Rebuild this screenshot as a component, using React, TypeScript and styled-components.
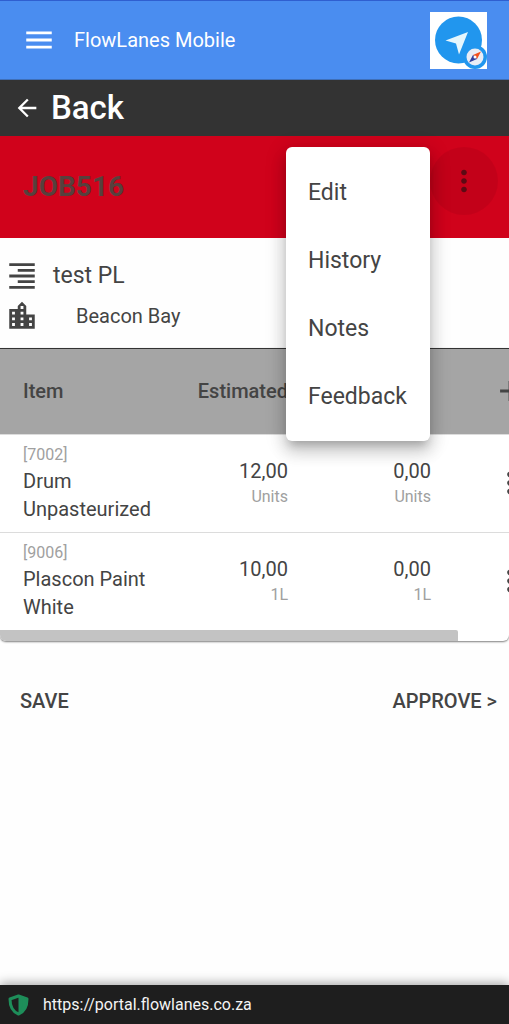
import React from "react";
import styled, { createGlobalStyle } from "styled-components";
import {
  MdAdd,
  MdArrowBack,
  MdFormatAlignRight,
  MdLocationCity,
  MdMenu,
  MdMoreVert,
} from "react-icons/md";

const GlobalStyle = createGlobalStyle`
  *, *::before, *::after { box-sizing: border-box; }
  body {
    margin: 0;
    background: #fefefe;
    color: #444;
    font-family: Roboto, "Liberation Sans", sans-serif;
    font-size: 20px;
    line-height: 28px;
  }
  button {
    font: inherit;
    color: inherit;
    border: 0;
    padding: 0;
    background: none;
    cursor: pointer;
  }
`;

const Page = styled.div`
  display: flex;
  flex-direction: column;
  min-height: 100vh;
`;

const AppBar = styled.header`
  display: flex;
  align-items: center;
  gap: 18px;
  height: 80px;
  padding: 0 22px;
  border-top: 1px solid #2f5fd0;
  border-bottom: 1px solid #3f6fb8;
  background: #4a8df0;
  color: #fff;
`;

const AppTitle = styled.span`
  flex: 1;
`;

const IconButton = styled.button<{ $size: number; $shade?: boolean }>`
  display: flex;
  align-items: center;
  justify-content: center;
  width: ${(p) => p.$size}px;
  height: ${(p) => p.$size}px;
  border-radius: 50%;
  background: ${(p) => (p.$shade ? "rgba(0, 0, 0, 0.06)" : "none")};
  flex: none;
`;

const LogoSvg = styled.svg`
  display: block;
  width: 57px;
  height: 57px;
  flex: none;
`;

const BackBar = styled.a`
  display: flex;
  align-items: center;
  gap: 10px;
  height: 56px;
  padding: 0 13px;
  background: #333;
  color: #fff;
  font-size: 33px;
  font-weight: 500;
  text-decoration: none;
`;

const JobBar = styled.section`
  display: flex;
  justify-content: space-between;
  height: 102px;
  padding: 11px 11px 11px 23px;
  background: #d0021b;
`;

const JobTitle = styled.h1`
  align-self: center;
  margin: 0;
  color: #57403d;
  font-size: 28px;
  font-weight: 700;
`;

const MenuAnchor = styled.div`
  position: relative;
  color: #5c0a14;
`;

const Menu = styled.div`
  position: absolute;
  top: 0;
  right: 100%;
  z-index: 2;
  display: flex;
  flex-direction: column;
  width: 144px;
  padding: 11px 0;
  border-radius: 6px;
  background: #fff;
  color: #444;
  box-shadow: 0 7px 8px -4px rgba(0, 0, 0, 0.2),
    0 11px 16px 1px rgba(0, 0, 0, 0.14), 0 4px 20px 3px rgba(0, 0, 0, 0.12);
`;

const MenuItem = styled.button`
  height: 68px;
  padding: 1px 22px 0;
  font-size: 23px;
  text-align: left;
`;

const Details = styled.section`
  display: flex;
  flex-direction: column;
  gap: 6px;
  padding: 21px 5px 15px;
`;

const DetailRow = styled.div<{ $gap: number; $size: number }>`
  display: flex;
  align-items: center;
  gap: ${(p) => p.$gap}px;
  height: 34px;
  font-size: ${(p) => p.$size}px;
`;

const TableCard = styled.section`
  overflow: hidden;
  border-top: 1px solid #333;
  border-radius: 0 0 6px 6px;
  background: #fff;
  box-shadow: 0 1px 2px rgba(0, 0, 0, 0.5);
`;

const TableScroller = styled.div`
  overflow-x: auto;
  scrollbar-width: none;
`;

const Table = styled.table`
  width: 566px;
  min-width: 100%;
  table-layout: fixed;
  border-collapse: collapse;
`;

const Col = styled.col<{ $width: number }>`
  width: ${(p) => p.$width}px;
`;

const HeadCell = styled.th<{ $align?: "left" | "right" }>`
  height: 85px;
  padding: 0 23px;
  background: #a5a5a5;
  font-weight: 500;
  text-align: ${(p) => p.$align ?? "left"};
`;

const Cell = styled.td<{ $align?: "left" | "right" }>`
  height: 98px;
  padding: 0 23px;
  border-top: 1px solid #dcdcdc;
  text-align: ${(p) => p.$align ?? "left"};
`;

const ActionBox = styled.div`
  display: flex;
  justify-content: center;
`;

const Small = styled.div`
  color: #a0a0a0;
  font-size: 16px;
  line-height: 24px;
`;

const ScrollTrack = styled.div`
  height: 11px;
`;

const ScrollThumb = styled.div`
  width: 90%;
  height: 100%;
  background: #c3c3c3;
  border-radius: 0 2px 0 0;
`;

const Actions = styled.div`
  display: flex;
  justify-content: space-between;
  padding: 46px 12px 46px 20px;
`;

const TextButton = styled.button`
  font-weight: 500;
`;

const AddressBar = styled.footer`
  display: flex;
  align-items: center;
  gap: 14px;
  height: 39px;
  margin-top: auto;
  padding: 0 8px;
  background: #1e1e1e;
  box-shadow: 0 -2px 10px rgba(0, 0, 0, 0.35);
  color: #f4f4f4;
  font-size: 16px;
`;

const ShieldSvg = styled.svg`
  display: block;
  width: 21px;
  height: 22px;
  flex: none;
`;

const menuItems = ["Edit", "History", "Notes", "Feedback"];

const items = [
  { code: "[7002]", name: "Drum Unpasteurized", estimated: "12,00", actual: "0,00", unit: "Units" },
  { code: "[9006]", name: "Plascon Paint White", estimated: "10,00", actual: "0,00", unit: "1L" },
];

function Logo() {
  return (
    <LogoSvg viewBox="0 0 57 57" role="img" aria-label="FlowLanes logo">
      <rect width="57" height="57" fill="#fff" />
      <circle cx="28.5" cy="28" r="23.5" fill="#2196ee" />
      <path d="M38 20 29 42.5 26 31.5 15.5 28.5Z" fill="#e6f6fd" />
      <circle cx="45" cy="45" r="12" fill="#2196ee" />
      <circle cx="45" cy="45" r="8.5" fill="#e9edf6" />
      <path d="M51 39.5 47 47 43 43Z" fill="#f4511e" />
      <path d="M39 50.5 43 43 47 47Z" fill="#303f9f" />
      <circle cx="45" cy="45" r="1.5" fill="#fff" />
    </LogoSvg>
  );
}

function Shield() {
  return (
    <ShieldSvg viewBox="0 0 21 22" aria-hidden="true">
      <path
        d="M10.5 2 19 5C19 12 17 17.500 10.5 20 4 17.500 2 12 2 5Z"
        fill="none"
        stroke="#1e8e5a"
        strokeWidth="3"
        strokeLinejoin="round"
      />
      <path d="M10.5 2 19 5C19 12 17 17.500 10.5 20Z" fill="#1e8e5a" />
      <path d="M12 6 15 7C15 11 14 14 12 16Z" fill="#1e8e5a" />
    </ShieldSvg>
  );
}

export default function App() {
  return (
    <Page>
      <GlobalStyle />
      <AppBar>
        <IconButton $size={34} aria-label="Open navigation">
          <MdMenu size={34} />
        </IconButton>
        <AppTitle>FlowLanes Mobile</AppTitle>
        <Logo />
      </AppBar>
      <BackBar href="#">
        <MdArrowBack size={28} />
        Back
      </BackBar>
      <JobBar>
        <JobTitle>JOB516</JobTitle>
        <MenuAnchor>
          <IconButton $size={68} $shade aria-label="Job options" aria-expanded="true">
            <MdMoreVert size={34} />
          </IconButton>
          <Menu role="menu">
            {menuItems.map((label) => (
              <MenuItem key={label} role="menuitem">
                {label}
              </MenuItem>
            ))}
          </Menu>
        </MenuAnchor>
      </JobBar>
      <Details>
        <DetailRow $gap={14} $size={23}>
          <MdFormatAlignRight size={34} />
          test PL
        </DetailRow>
        <DetailRow $gap={37} $size={20}>
          <MdLocationCity size={34} />
          Beacon Bay
        </DetailRow>
      </Details>
      <TableCard>
        <TableScroller>
          <Table>
            <colgroup>
              <Col $width={174} />
              <Col $width={137} />
              <Col $width={143} />
              <Col $width={112} />
            </colgroup>
            <thead>
              <tr>
                <HeadCell>Item</HeadCell>
                <HeadCell $align="right">Estimated</HeadCell>
                <HeadCell />
                <HeadCell>
                  <ActionBox>
                    <IconButton $size={34} aria-label="Add item">
                      <MdAdd size={34} />
                    </IconButton>
                  </ActionBox>
                </HeadCell>
              </tr>
            </thead>
            <tbody>
              {items.map((item) => (
                <tr key={item.code}>
                  <Cell>
                    <Small>{item.code}</Small>
                    {item.name}
                  </Cell>
                  <Cell $align="right">
                    {item.estimated}
                    <Small>{item.unit}</Small>
                  </Cell>
                  <Cell $align="right">
                    {item.actual}
                    <Small>{item.unit}</Small>
                  </Cell>
                  <Cell>
                    <ActionBox>
                      <IconButton $size={34} aria-label="Item options">
                        <MdMoreVert size={34} />
                      </IconButton>
                    </ActionBox>
                  </Cell>
                </tr>
              ))}
            </tbody>
          </Table>
        </TableScroller>
        <ScrollTrack>
          <ScrollThumb />
        </ScrollTrack>
      </TableCard>
      <Actions>
        <TextButton>SAVE</TextButton>
        <TextButton>APPROVE &gt;</TextButton>
      </Actions>
      <AddressBar>
        <Shield />
        https://portal.flowlanes.co.za
      </AddressBar>
    </Page>
  );
}
